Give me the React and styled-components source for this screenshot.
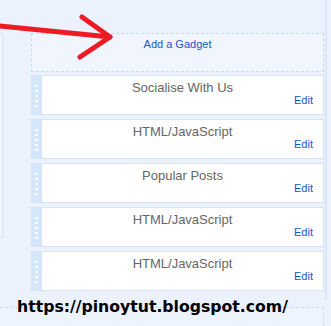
import React from 'react';
import styled, { createGlobalStyle } from 'styled-components';

const Global = createGlobalStyle`
  html, body { margin: 0; padding: 0; background: #ebf2fd; }
  body { width: 331px; height: 326px; overflow: hidden; font-family: "Liberation Sans", Arial, sans-serif; }
`;

const Page = styled.div`
  position: relative;
  width: 331px;
  height: 326px;
  overflow: hidden;
`;

const Section = styled.div`
  display: flex;
  align-items: flex-start;
  width: 327px;
  height: 300px;
  box-sizing: border-box;
  padding-top: 33px;
  border-right: 2px solid #dae6f8;
`;

const LeftPanel = styled.div`
  width: 3px;
  height: 205px;
  box-sizing: border-box;
  background: #f4f8fe;
  border: 1px solid #d6e4f8;
  border-left: none;
`;

const Main = styled.div`
  display: flex;
  flex-direction: column;
  width: 293px;
  margin-left: 28px;
`;

const AddBox = styled.div`
  height: 39px;
  box-sizing: border-box;
  border: 1px dashed #cad8f1;
  background: #f0f5fe;
  padding-top: 4px;
  text-align: center;
  font-size: 11px;
  line-height: 13px;
  margin-bottom: 3px;
`;

const AddLink = styled.a`
  color: #1a56c9;
  font-size: 11px;
  line-height: 13px;
  text-decoration: none;
`;

const Widget = styled.div`
  display: flex;
  height: 40px;
  box-sizing: border-box;
  border: 1px solid #d4e5f8;
  background: #fff;
  margin-bottom: 4px;
`;

const Handle = styled.div`
  width: 10px;
  box-sizing: border-box;
  background: #d4e6fa;
  padding: 9px 0 0 3px;
  display: flex;
  flex-direction: column;
  gap: 3px;
`;

const Dot = styled.span`
  display: block;
  width: 3px;
  height: 2px;
  background: #fff;
`;

const Body = styled.div`
  flex: 1;
  display: flex;
  flex-direction: column;
  padding: 6px 10px 0 0;
`;

const Title = styled.div`
  text-align: center;
  font-size: 13px;
  line-height: 12px;
  color: #666;
  padding-left: 10px;
`;

const Edit = styled.a`
  align-self: flex-end;
  font-size: 11px;
  line-height: 13px;
  color: #1357cb;
  text-decoration: none;
`;

const NextBox = styled.div`
  margin-top: 7px;
  width: 324px;
  height: 40px;
  box-sizing: border-box;
  border-top: 1px dashed #cad8f1;
  border-right: 1px dashed #cad8f1;
  background: #eef4fe;
`;

const Watermark = styled.div`
  position: absolute;
  left: 17px;
  top: 298px;
  font-family: "DejaVu Sans", Verdana, sans-serif;
  font-weight: bold;
  font-size: 15.7px;
  line-height: 18px;
  color: #000;
  white-space: nowrap;
`;

const Arrow = styled.svg`
  position: absolute;
  left: 0;
  top: 0;
  overflow: visible;
`;

const widgets = [
  'Socialise With Us',
  'HTML/JavaScript',
  'Popular Posts',
  'HTML/JavaScript',
  'HTML/JavaScript',
];

export default function App() {
  return (
    <Page>
      <Global />
      <Section>
        <LeftPanel />
        <Main>
          <AddBox>
            <AddLink>Add a Gadget</AddLink>
          </AddBox>
          {widgets.map((t, i) => (
            <Widget key={i}>
              <Handle>
                {[0, 1, 2, 3, 4].map((d) => (
                  <Dot key={d} />
                ))}
              </Handle>
              <Body>
                <Title>{t}</Title>
                <Edit>Edit</Edit>
              </Body>
            </Widget>
          ))}
        </Main>
      </Section>
      <NextBox />
      <Watermark>https://pinoytut.blogspot.com/</Watermark>
      <Arrow width="120" height="64" viewBox="0 0 120 64">
        <g stroke="#ed1c24" strokeWidth="5" strokeLinecap="round" strokeLinejoin="round" fill="none">
          <line x1="-4" y1="25.6" x2="110" y2="37" />
          <polyline points="82,17 110,37 80,57" />
        </g>
      </Arrow>
    </Page>
  );
}
